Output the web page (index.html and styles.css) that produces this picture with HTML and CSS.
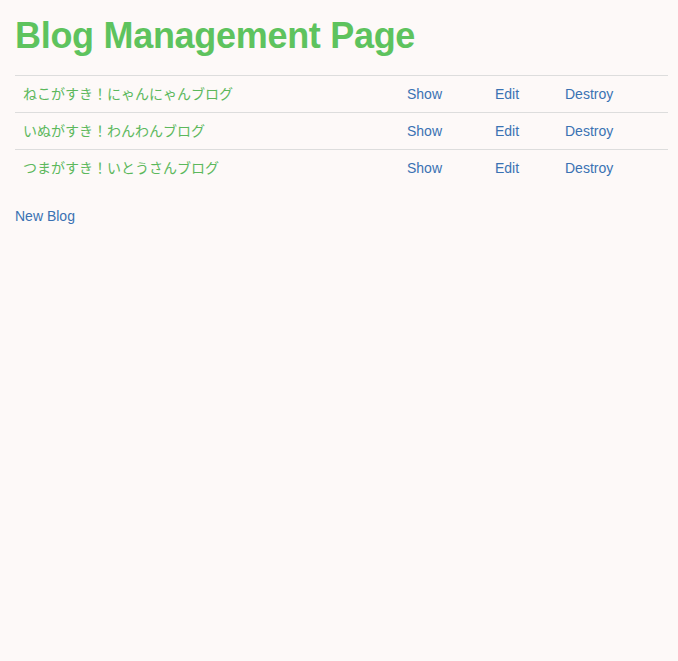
FILE: index.html
```html
<!DOCTYPE html>
<html lang="ja">
<head>
<meta charset="utf-8">
<title>Blog Management Page</title>
<link rel="stylesheet" href="styles.css">
</head>
<body>
<div class="container">
  <h1 class="title">Blog Management Page</h1>
  <table class="blogs">
    <tbody>
      <tr>
        <td class="col-title">ねこがすき！にゃんにゃんブログ</td>
        <td class="col-show"><a href="#">Show</a></td>
        <td class="col-edit"><a href="#">Edit</a></td>
        <td class="col-destroy"><a href="#">Destroy</a></td>
      </tr>
      <tr>
        <td class="col-title">いぬがすき！わんわんブログ</td>
        <td class="col-show"><a href="#">Show</a></td>
        <td class="col-edit"><a href="#">Edit</a></td>
        <td class="col-destroy"><a href="#">Destroy</a></td>
      </tr>
      <tr>
        <td class="col-title">つまがすき！いとうさんブログ</td>
        <td class="col-show"><a href="#">Show</a></td>
        <td class="col-edit"><a href="#">Edit</a></td>
        <td class="col-destroy"><a href="#">Destroy</a></td>
      </tr>
    </tbody>
  </table>
  <a class="new-link" href="#">New Blog</a>
</div>
</body>
</html>
```

FILE: styles.css
```css
html, body {
  margin: 0;
  padding: 0;
  background: #fdf9f8;
}
body {
  font-family: "Liberation Sans", "Noto Sans CJK JP", sans-serif;
  font-size: 14px;
  line-height: 20px;
  color: #333;
}
.container {
  padding: 0 10px 0 15px;
}
.title {
  margin: 16px 0 19px;
  font-size: 36px;
  line-height: 40px;
  font-weight: bold;
  letter-spacing: -0.3px;
  color: #5ec35e;
}
.blogs {
  width: 653px;
  border-collapse: collapse;
  table-layout: fixed;
  margin-bottom: 20px;
}
.blogs td {
  padding: 8px;
  border-top: 1px solid #ddd;
  vertical-align: top;
}
.col-title {
  width: 368px;
  color: #5cb85c;
}
.col-show { width: 72px; }
.col-edit { width: 54px; }
a {
  color: #3a72b3;
  text-decoration: none;
}
.new-link {
  display: inline-block;
}
```
